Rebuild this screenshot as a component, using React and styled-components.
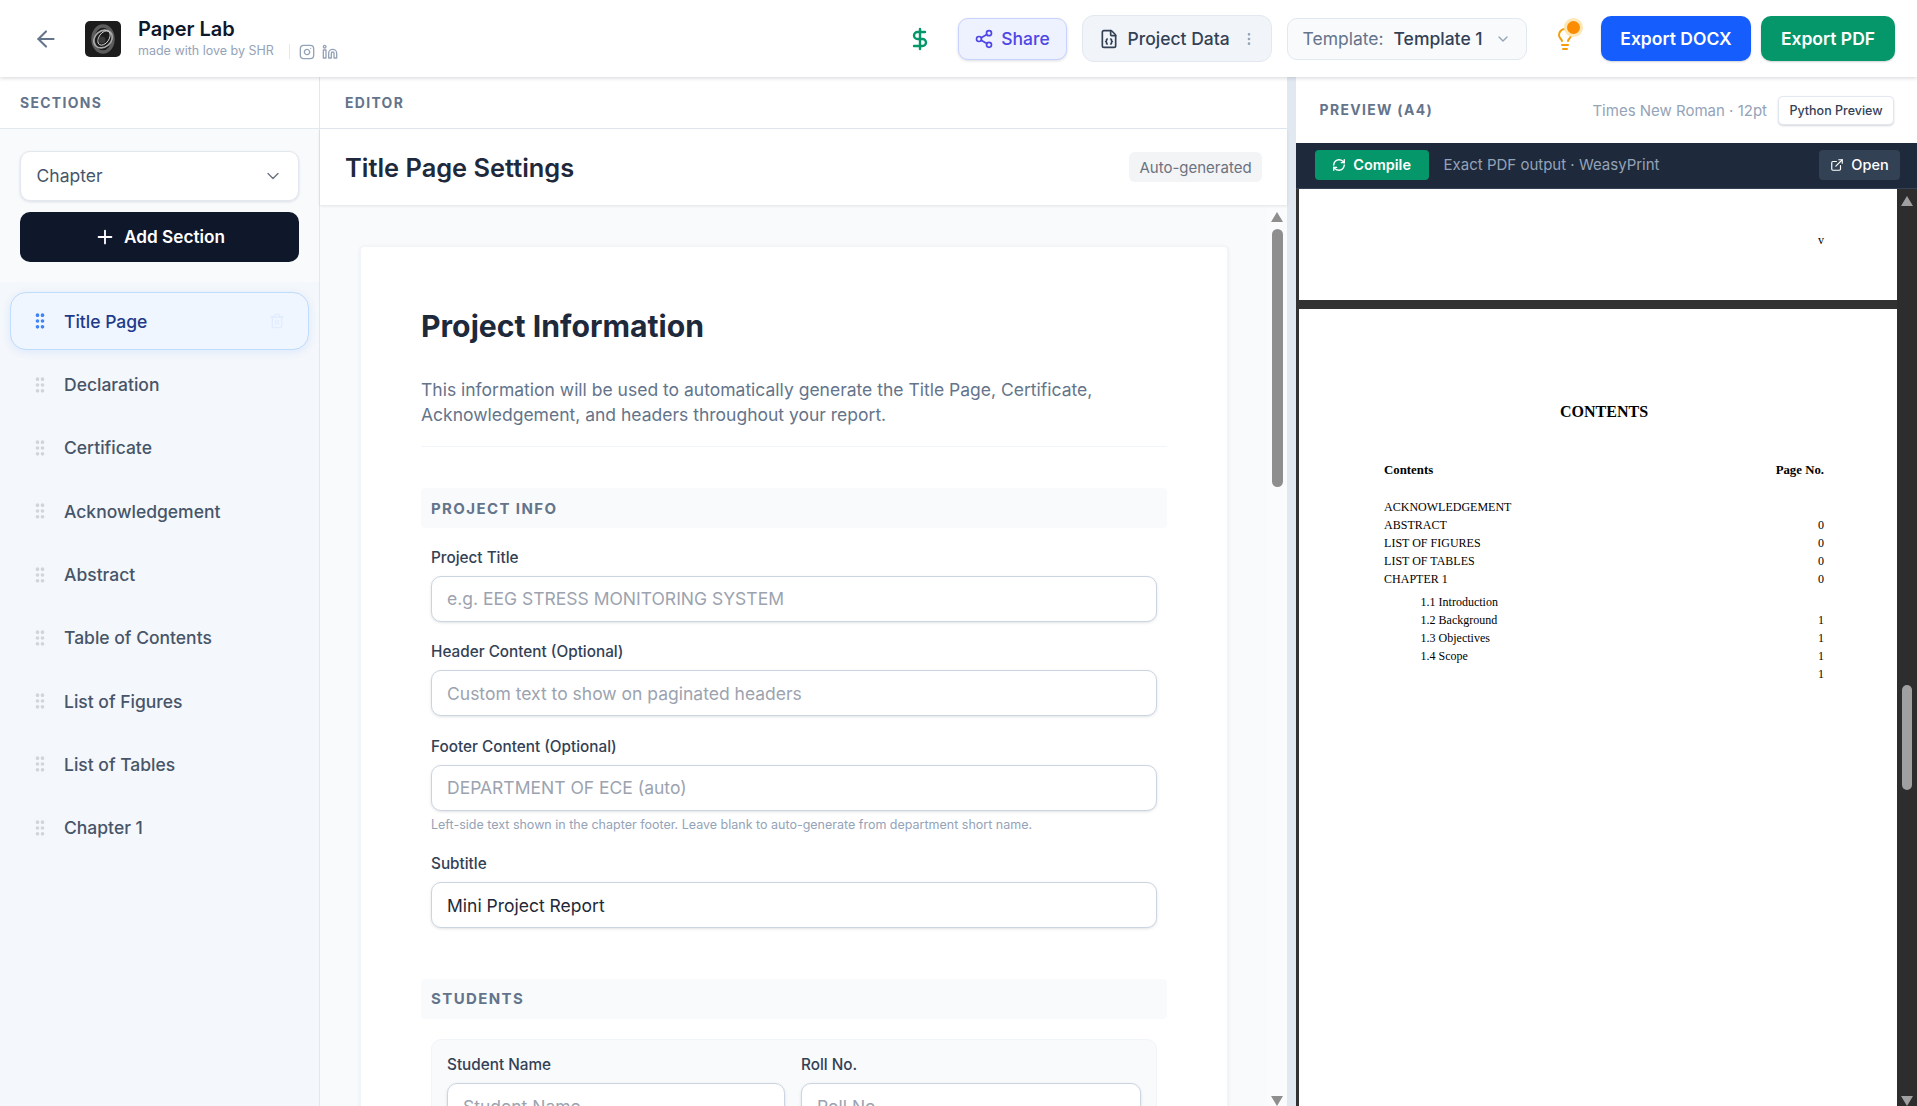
import styled, { createGlobalStyle } from "styled-components";
import {
  ArrowLeft,
  Instagram,
  Linkedin,
  DollarSign,
  Share2,
  FileJson,
  EllipsisVertical,
  ChevronDown,
  Lightbulb,
  Plus,
  GripVertical,
  Trash2,
  RefreshCw,
  ExternalLink,
} from "lucide-react";

const GlobalStyle = createGlobalStyle`
  html, body { margin: 0; padding: 0; height: 100%; overflow: hidden; }
  body { font-family: Inter, "Liberation Sans", sans-serif; color: #1e293b; background: #fff; }
  * { box-sizing: border-box; }
`;

const Shell = styled.div`
  display: flex;
  flex-direction: column;
  width: 100%;
  height: 100vh;
  overflow: hidden;
`;

/* top bar */
const Header = styled.header`
  position: relative;
  z-index: 5;
  flex: 0 0 77px;
  display: flex;
  align-items: center;
  justify-content: space-between;
  padding: 0 22px 0 33px;
  background: #fff;
  box-shadow: 0 1px 4px rgba(15, 23, 42, 0.18);
`;
const HeaderLeft = styled.div`
  display: flex;
  align-items: center;
`;
const BackBtn = styled.div`
  display: flex;
  color: #64748b;
  margin-right: 26px;
`;
const Logo = styled.div`
  width: 36px;
  height: 36px;
  border-radius: 5px;
  background: #1c1c1c;
  display: flex;
  align-items: center;
  justify-content: center;
  margin-right: 17px;
`;
const Brand = styled.div`
  display: flex;
  flex-direction: column;
`;
const BrandName = styled.div`
  font-size: 20px;
  line-height: 24px;
  font-weight: 600;
  color: #0f172a;
`;
const BrandMeta = styled.div`
  display: flex;
  align-items: center;
  margin-top: 1px;
`;
const Tagline = styled.span`
  font-size: 12.5px;
  line-height: 16px;
  color: #94a3b8;
`;
const MetaDivider = styled.span`
  width: 1px;
  height: 15px;
  margin: 0 9px 0 15px;
  background: #e2e8f0;
`;
const Social = styled.span`
  display: flex;
  color: #94a3b8;
  margin-right: 7px;
  margin-top: 2px;
`;
const HeaderRight = styled.div`
  display: flex;
  align-items: center;
`;
const Dollar = styled.div`
  display: flex;
  color: #059669;
  margin-right: 26px;
`;
const ShareBtn = styled.div`
  display: flex;
  align-items: center;
  gap: 7px;
  height: 42px;
  width: 109px;
  justify-content: center;
  border: 1px solid #c7d2fe;
  border-radius: 10px;
  background: #eef2ff;
  color: #4f46e5;
  font-size: 17.5px;
  font-weight: 500;
  box-shadow: 0 1px 3px rgba(15, 23, 42, 0.15);
  margin-right: 15px;
`;
const DataBtn = styled.div`
  display: flex;
  align-items: center;
  height: 47px;
  width: 190px;
  padding: 0 14px 0 16px;
  border: 1px solid #e2e8f0;
  border-radius: 12px;
  background: #f1f5f9;
  color: #334155;
  font-size: 17.5px;
  font-weight: 500;
  margin-right: 15px;
  svg:first-child { margin-right: 9px; }
  svg:last-child { margin-left: auto; color: #94a3b8; }
`;
const TemplateBtn = styled.div`
  display: flex;
  align-items: center;
  height: 42px;
  width: 240px;
  padding: 0 15px;
  border: 1px solid #e2e8f0;
  border-radius: 10px;
  background: #f8fafc;
  font-size: 17.5px;
  svg { margin-left: auto; color: #94a3b8; }
`;
const TemplateLabel = styled.span`
  color: #64748b;
  margin-right: 10px;
`;
const TemplateValue = styled.span`
  color: #334155;
  font-weight: 500;
`;
const Tip = styled.div`
  position: relative;
  display: flex;
  color: #f59e0b;
  margin: 1px 24.5px 0 26px;
`;
const TipDot = styled.span`
  position: absolute;
  top: -6px;
  right: -3px;
  width: 13px;
  height: 13px;
  border-radius: 50%;
  background: #fb8c00;
  box-shadow: 0 0 0 3px #fde7b4;
`;
const ExportBtn = styled.div`
  display: flex;
  align-items: center;
  justify-content: center;
  height: 45px;
  width: ${(p) => p.$w}px;
  margin-left: ${(p) => p.$ml || 0}px;
  border-radius: 10px;
  background: ${(p) => p.$bg};
  color: #fff;
  font-size: 17.5px;
  font-weight: 600;
  box-shadow: 0 1px 2px rgba(15, 23, 42, 0.2);
`;

/* columns */
const Columns = styled.div`
  flex: 1;
  min-height: 0;
  display: flex;
`;
const Sidebar = styled.aside`
  flex: 0 0 320px;
  display: flex;
  flex-direction: column;
  border-right: 1px solid #e2e8f0;
  background: #f8fafc;
`;
const PanelHead = styled.div`
  flex: 0 0 52px;
  display: flex;
  align-items: center;
  padding: 0 ${(p) => p.$px || 20}px;
  background: #fff;
  border-bottom: 1px solid #e2e8f0;
`;
const PanelLabel = styled.span`
  font-size: 13.9px;
  font-weight: 700;
  letter-spacing: 1.35px;
  color: #64748b;
`;
const SideControls = styled.div`
  display: flex;
  flex-direction: column;
  gap: 11px;
  padding: 22px 20px 20px;
`;
const SelectBox = styled.div`
  height: 50px;
  display: flex;
  align-items: center;
  justify-content: space-between;
  padding: 0 15.5px 1px;
  background: #fff;
  border: 1px solid #e2e8f0;
  border-radius: 10px;
  box-shadow: 0 1px 3px rgba(15, 23, 42, 0.12);
  color: #475569;
  font-size: 17.5px;
  svg { color: #6b7280; }
`;
const AddBtn = styled.div`
  height: 50px;
  display: flex;
  align-items: center;
  justify-content: center;
  gap: 8px;
  padding-bottom: 1px;
  border-radius: 10px;
  background: #0f172a;
  color: #fff;
  font-size: 17.2px;
  font-weight: 600;
`;
const SectionList = styled.div`
  flex: 1;
  display: flex;
  flex-direction: column;
  gap: 5.3px;
  padding: 10.4px 10px;
  background: #f4f7fb;
`;
const SectionItem = styled.div`
  height: 58px;
  display: flex;
  align-items: center;
  gap: 14px;
  padding: 0 19px;
  border: 1px solid ${(p) => (p.$active ? "#bfdbfe" : "transparent")};
  border-radius: 16px;
  background: ${(p) => (p.$active ? "#eff6ff" : "transparent")};
  box-shadow: ${(p) => (p.$active ? "0 2px 8px rgba(59,130,246,0.12)" : "none")};
  color: ${(p) => (p.$active ? "#1e3a8a" : "#475569")};
  font-size: 17.5px;
  font-weight: 500;
  svg:first-child { color: ${(p) => (p.$active ? "#3b82f6" : "#d1d5db")}; }
  svg:last-child:not(:first-child) { margin-left: auto; margin-right: 4px; color: #e0ecff; }
`;

/* editor */
const Editor = styled.main`
  flex: 0 0 967px;
  min-width: 0;
  display: flex;
  flex-direction: column;
  background: #fff;
`;
const TitleBar = styled.div`
  position: relative;
  z-index: 2;
  flex: 0 0 76px;
  display: flex;
  align-items: center;
  justify-content: space-between;
  padding: 0 25px;
  background: #fff;
  box-shadow: 0 1px 3px rgba(15, 23, 42, 0.1);
`;
const PageTitle = styled.h1`
  margin: 0;
  font-size: 25.4px;
  font-weight: 600;
  color: #1e293b;
`;
const Chip = styled.span`
  height: 30px;
  width: 133px;
  display: flex;
  align-items: center;
  justify-content: center;
  border-radius: 6px;
  background: #f3f4f6;
  color: #6b7280;
  font-size: 15px;
`;
const EditorBody = styled.div`
  flex: 1;
  min-height: 0;
  display: flex;
  background: #f9fafb;
  overflow: hidden;
`;
const EditorScroll = styled.div`
  flex: 1;
  min-width: 0;
  padding: 41px 39px 0 40px;
  overflow: hidden;
`;
const Card = styled.div`
  padding: 60px 60px 40px;
  background: #fff;
  border: 1px solid #f1f5f9;
  border-radius: 4px;
  box-shadow: 0 1px 4px rgba(15, 23, 42, 0.07);
`;
const CardTitle = styled.h2`
  margin: 0;
  font-size: 30.2px;
  line-height: 38px;
  font-weight: 700;
  color: #1e293b;
`;
const Intro = styled.p`
  margin: 32px 0 0;
  padding-bottom: 18.6px;
  border-bottom: 1px solid #f1f5f9;
  font-size: 17.5px;
  line-height: 25.4px;
  color: #64748b;
`;
const GroupHead = styled.div`
  height: 40px;
  display: flex;
  align-items: center;
  padding: 0 10px;
  margin-top: ${(p) => p.$mt}px;
  border-radius: 4px;
  background: #f8fafc;
  font-size: 15px;
  font-weight: 700;
  letter-spacing: 1.4px;
  color: #64748b;
`;
const Fields = styled.div`
  padding: 0 10.5px 0 10px;
`;
const Field = styled.div`
  margin-top: ${(p) => p.$mt}px;
`;
const Label = styled.label`
  display: block;
  margin-bottom: 9px;
  font-size: 15.3px;
  line-height: 18px;
  font-weight: 500;
  color: #334155;
`;
const Input = styled.input`
  display: block;
  width: 100%;
  height: 46px;
  padding: 0 15px;
  background: #fff;
  border: 1px solid #cbd5e1;
  border-radius: 10px;
  box-shadow: 0 1px 3px rgba(15, 23, 42, 0.12);
  font-family: inherit;
  font-size: 17.5px;
  color: #1f2937;
  outline: none;
  &::placeholder { color: #9ca3af; opacity: 1; }
`;
const Hint = styled.div`
  margin-top: 6px;
  font-size: 12.5px;
  line-height: 16px;
  color: #94a3b8;
`;
const StudentCard = styled.div`
  display: grid;
  grid-template-columns: 338px 340px;
  gap: 16px;
  margin-top: 20.5px;
  padding: 16px 15px 30px;
  background: #f8fafc;
  border: 1px solid #f1f5f9;
  border-radius: 10px;
`;

/* browser style scrollbars */
const ScrollGutter = styled.div`
  flex: 0 0 20px;
  display: flex;
  flex-direction: column;
  align-items: center;
  padding-top: 7px;
  background: ${(p) => (p.$dark ? "#2d2d2d" : "#fafbfc")};
`;
const Arrow = styled.span`
  width: 0;
  height: 0;
  border-left: 6.5px solid transparent;
  border-right: 6.5px solid transparent;
  border-bottom: 10px solid ${(p) => (p.$dark ? "#a0a0a0" : "#8e8e8e")};
  ${(p) => p.$down && `
    border-bottom: 0;
    border-top: 10px solid ${p.$dark ? "#a0a0a0" : "#8e8e8e"};
    margin-top: auto;
  `}
`;
const Thumb = styled.span`
  width: ${(p) => (p.$dark ? 10.5 : 11)}px;
  height: ${(p) => p.$h}px;
  margin-top: ${(p) => p.$mt}px;
  border-radius: 6px;
  background: ${(p) => (p.$dark ? "#a0a0a0" : "#8e8e8e")};
`;

const Resizer = styled.div`
  flex: 0 0 8.6px;
  background: #e2e8f0;
`;

/* preview */
const Preview = styled.section`
  flex: 1;
  min-width: 0;
  display: flex;
  flex-direction: column;
  background: #fff;
`;
const PreviewHead = styled.div`
  flex: 0 0 66px;
  display: flex;
  align-items: center;
  padding: 0 23px 0 24px;
`;
const PreviewMeta = styled.span`
  margin-left: auto;
  margin-right: 11px;
  font-size: 15px;
  color: #94a3b8;
`;
const EngineBtn = styled.div`
  height: 29px;
  width: 116px;
  display: flex;
  align-items: center;
  justify-content: center;
  border: 1px solid #e2e8f0;
  border-radius: 5px;
  background: #fff;
  box-shadow: 0 1px 2px rgba(15, 23, 42, 0.18);
  font-size: 12.5px;
  font-weight: 500;
  color: #334155;
`;
const CompileBar = styled.div`
  flex: 0 0 46px;
  display: flex;
  align-items: center;
  padding: 0 17px 2px 19px;
  background: #1e293b;
  border-bottom: 1px solid #334155;
`;
const CompileBtn = styled.div`
  height: 30px;
  width: 114px;
  display: flex;
  align-items: center;
  justify-content: center;
  gap: 7px;
  border-radius: 4px;
  background: #059669;
  color: #fff;
  font-size: 14.5px;
  font-weight: 600;
`;
const CompileNote = styled.span`
  margin-left: 15px;
  font-size: 15px;
  color: #94a3b8;
`;
const OpenBtn = styled.div`
  margin-left: auto;
  height: 30px;
  width: 81px;
  display: flex;
  align-items: center;
  justify-content: center;
  gap: 7px;
  border-radius: 4px;
  background: #334155;
  color: #fff;
  font-size: 14.5px;
  font-weight: 500;
`;
const Viewer = styled.div`
  flex: 1;
  min-height: 0;
  display: flex;
  background: #323232;
  overflow: hidden;
`;
const Pages = styled.div`
  flex: 1;
  min-width: 0;
  display: flex;
  flex-direction: column;
  gap: 9px;
  padding-left: 3.5px;
  font-family: "Liberation Serif", "Times New Roman", serif;
  color: #000;
`;
const PdfPage = styled.div`
  background: #fff;
`;
const PageTail = styled(PdfPage)`
  flex: 0 0 111px;
  padding: 44px 73px 0 0;
  text-align: right;
  font-size: 12px;
  line-height: 14px;
`;
const ContentsPage = styled(PdfPage)`
  flex: 1;
  padding: 93px 73px 0 85px;
`;
const ContentsTitle = styled.div`
  text-align: center;
  font-size: 16px;
  line-height: 19px;
  font-weight: 700;
`;
const TocHead = styled.div`
  display: flex;
  justify-content: space-between;
  margin: 41px 0 20px;
  font-size: 12.8px;
  line-height: 16px;
  font-weight: 700;
`;
const TocGroup = styled.div`
  margin-bottom: 5px;
  padding-left: ${(p) => p.$indent || 0}px;
`;
const TocRow = styled.div`
  display: flex;
  justify-content: space-between;
  font-size: 12px;
  line-height: 18px;
  height: 18px;
`;

const sections = [
  "Title Page",
  "Declaration",
  "Certificate",
  "Acknowledgement",
  "Abstract",
  "Table of Contents",
  "List of Figures",
  "List of Tables",
  "Chapter 1",
];

const tocMain = [
  ["ACKNOWLEDGEMENT", ""],
  ["ABSTRACT", "0"],
  ["LIST OF FIGURES", "0"],
  ["LIST OF TABLES", "0"],
  ["CHAPTER 1", "0"],
];

const tocSub = [
  ["1.1 Introduction", ""],
  ["1.2 Background", "1"],
  ["1.3 Objectives", "1"],
  ["1.4 Scope", "1"],
  ["", "1"],
];

function LogoMark() {
  return (
    <svg width="28" height="32" viewBox="0 0 28 32" fill="none">
      <ellipse cx="14" cy="16" rx="10" ry="13" stroke="#5c5c5c" strokeWidth="3.5" />
      <ellipse cx="14" cy="16" rx="10" ry="8" stroke="#a8a8a8" strokeWidth="1.6" transform="rotate(-40 14 16)" />
      <ellipse cx="15" cy="15" rx="8" ry="5" stroke="#d8d8d8" strokeWidth="0.9" transform="rotate(-55 15 15)" />
      <circle cx="13" cy="17" r="3.5" fill="#3a3a3a" />
    </svg>
  );
}

export default function App() {
  return (
    <Shell>
      <GlobalStyle />
      <Header>
        <HeaderLeft>
          <BackBtn>
            <ArrowLeft size={26} strokeWidth={1.9} />
          </BackBtn>
          <Logo>
            <LogoMark />
          </Logo>
          <Brand>
            <BrandName>Paper Lab</BrandName>
            <BrandMeta>
              <Tagline>made with love by SHR</Tagline>
              <MetaDivider />
              <Social>
                <Instagram size={16} />
              </Social>
              <Social>
                <Linkedin size={16} />
              </Social>
            </BrandMeta>
          </Brand>
        </HeaderLeft>
        <HeaderRight>
          <Dollar>
            <DollarSign size={24} strokeWidth={2.4} />
          </Dollar>
          <ShareBtn>
            <Share2 size={20} />
            Share
          </ShareBtn>
          <DataBtn>
            <FileJson size={20} />
            Project Data
            <EllipsisVertical size={16} />
          </DataBtn>
          <TemplateBtn>
            <TemplateLabel>Template:</TemplateLabel>
            <TemplateValue>Template 1</TemplateValue>
            <ChevronDown size={16} />
          </TemplateBtn>
          <Tip>
            <Lightbulb size={24} />
            <TipDot />
          </Tip>
          <ExportBtn $w={150} $bg="#155dfc">Export DOCX</ExportBtn>
          <ExportBtn $w={134} $ml={10} $bg="#059669">Export PDF</ExportBtn>
        </HeaderRight>
      </Header>
      <Columns>
        <Sidebar>
          <PanelHead>
            <PanelLabel>SECTIONS</PanelLabel>
          </PanelHead>
          <SideControls>
            <SelectBox>
              Chapter
              <ChevronDown size={20} strokeWidth={1.6} />
            </SelectBox>
            <AddBtn>
              <Plus size={22} />
              Add Section
            </AddBtn>
          </SideControls>
          <SectionList>
            {sections.map((name, i) => (
              <SectionItem key={name} $active={i === 0}>
                <GripVertical size={20} strokeWidth={2.4} />
                {name}
                {i === 0 && <Trash2 size={16} />}
              </SectionItem>
            ))}
          </SectionList>
        </Sidebar>
        <Editor>
          <PanelHead $px={25}>
            <PanelLabel>EDITOR</PanelLabel>
          </PanelHead>
          <TitleBar>
            <PageTitle>Title Page Settings</PageTitle>
            <Chip>Auto-generated</Chip>
          </TitleBar>
          <EditorBody>
            <EditorScroll>
              <Card>
                <CardTitle>Project Information</CardTitle>
                <Intro>
                  This information will be used to automatically generate the Title Page, Certificate,
                  <br />
                  Acknowledgement, and headers throughout your report.
                </Intro>
                <GroupHead $mt={41}>PROJECT INFO</GroupHead>
                <Fields>
                  <Field $mt={20.5}>
                    <Label>Project Title</Label>
                    <Input placeholder="e.g. EEG STRESS MONITORING SYSTEM" />
                  </Field>
                  <Field $mt={21.5}>
                    <Label>Header Content (Optional)</Label>
                    <Input placeholder="Custom text to show on paginated headers" />
                  </Field>
                  <Field $mt={21.5}>
                    <Label>Footer Content (Optional)</Label>
                    <Input placeholder="DEPARTMENT OF ECE (auto)" />
                    <Hint>Left-side text shown in the chapter footer. Leave blank to auto-generate from department short name.</Hint>
                  </Field>
                  <Field $mt={22.5}>
                    <Label>Subtitle</Label>
                    <Input defaultValue="Mini Project Report" />
                  </Field>
                </Fields>
                <GroupHead $mt={50.5}>STUDENTS</GroupHead>
                <Fields>
                  <StudentCard>
                    <div>
                      <Label>Student Name</Label>
                      <Input placeholder="Student Name" />
                    </div>
                    <div>
                      <Label>Roll No.</Label>
                      <Input placeholder="Roll No." />
                    </div>
                  </StudentCard>
                </Fields>
              </Card>
            </EditorScroll>
            <ScrollGutter>
              <Arrow />
              <Thumb $h={258} $mt={7} />
              <Arrow $down />
            </ScrollGutter>
          </EditorBody>
        </Editor>
        <Resizer />
        <Preview>
          <PreviewHead>
            <PanelLabel>PREVIEW (A4)</PanelLabel>
            <PreviewMeta>Times New Roman · 12pt</PreviewMeta>
            <EngineBtn>Python Preview</EngineBtn>
          </PreviewHead>
          <CompileBar>
            <CompileBtn>
              <RefreshCw size={14} strokeWidth={2.4} />
              Compile
            </CompileBtn>
            <CompileNote>Exact PDF output · WeasyPrint</CompileNote>
            <OpenBtn>
              <ExternalLink size={14} />
              Open
            </OpenBtn>
          </CompileBar>
          <Viewer>
            <Pages>
              <PageTail>v</PageTail>
              <ContentsPage>
                <ContentsTitle>CONTENTS</ContentsTitle>
                <TocHead>
                  <span>Contents</span>
                  <span>Page No.</span>
                </TocHead>
                <TocGroup>
                  {tocMain.map(([t, n]) => (
                    <TocRow key={t}>
                      <span>{t}</span>
                      <span>{n}</span>
                    </TocRow>
                  ))}
                </TocGroup>
                <TocGroup $indent={36.5}>
                  {tocSub.map(([t, n], i) => (
                    <TocRow key={i}>
                      <span>{t}</span>
                      <span>{n}</span>
                    </TocRow>
                  ))}
                </TocGroup>
              </ContentsPage>
            </Pages>
            <ScrollGutter $dark>
              <Arrow $dark />
              <Thumb $dark $h={105} $mt={479} />
              <Arrow $dark $down />
            </ScrollGutter>
          </Viewer>
        </Preview>
      </Columns>
    </Shell>
  );
}
